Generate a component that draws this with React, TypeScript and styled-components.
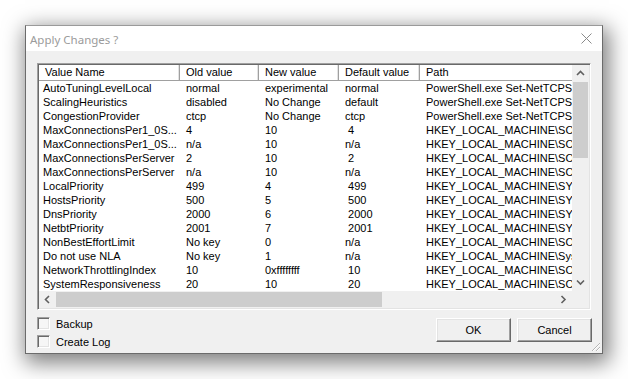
import styled, { createGlobalStyle } from "styled-components";

const GlobalStyle = createGlobalStyle`
  html, body {
    margin: 0;
    padding: 0;
    background: #ffffff;
  }
  body {
    font-family: "Liberation Sans", Arial, sans-serif;
    font-size: 11px;
    color: #000;
  }
`;

const Page = styled.div`
  width: 628px;
  height: 379px;
  padding: 25px 0 0 25px;
  box-sizing: border-box;
  overflow: hidden;
`;

const Window = styled.div`
  position: relative;
  width: 578px;
  height: 329px;
  box-sizing: border-box;
  border: 1px solid #6b6b6b;
  border-top-color: #9a9a9a;
  background: #f0f0f0;
  display: flex;
  flex-direction: column;
  box-shadow: 3px 6px 20px 3px rgba(0, 0, 0, 0.5);
`;

const TitleBar = styled.div`
  height: 25px;
  background: #ffffff;
  display: flex;
  align-items: center;
  justify-content: space-between;
  padding: 0 10px 0 4px;
  flex-shrink: 0;
`;

const Title = styled.span`
  font-family: "Noto Sans", "Open Sans", sans-serif;
  font-size: 11.5px;
  color: #9b9b9b;
  padding-top: 1px;
`;

const CloseButton = styled.div`
  width: 12px;
  height: 12px;
  display: flex;
  align-items: center;
  justify-content: center;
`;

const Body = styled.div`
  flex: 1;
  padding: 12px 10px 0 11px;
  display: flex;
  flex-direction: column;
`;

const ListView = styled.div`
  width: 554px;
  height: 247px;
  box-sizing: border-box;
  border: 1px solid;
  border-color: #a0a0a0 #ffffff #ffffff #a0a0a0;
  box-shadow: inset 1px 1px 0 #696969, inset -1px -1px 0 #e3e3e3;
  padding: 1px;
  background: #ffffff;
  display: grid;
  grid-template-columns: 533px 17px;
  grid-template-rows: 226px 17px;
`;

const Viewport = styled.div`
  overflow: hidden;
  background: #ffffff;
`;

const cols = "141px 79px 80px 81px 320px";

const HeaderRow = styled.div`
  display: grid;
  grid-template-columns: ${cols};
  height: 16px;
`;

const HeaderCell = styled.div`
  box-sizing: border-box;
  height: 16px;
  line-height: 15px;
  padding-left: 6px;
  background: #ffffff;
  border-right: 1px solid #a0a0a0;
  border-bottom: 1px solid #a0a0a0;
  box-shadow: inset 1px 0 0 #ffffff, inset -1px 0 0 #e3e3e3;
  white-space: nowrap;
  overflow: hidden;
`;

const Row = styled.div`
  display: grid;
  grid-template-columns: ${cols};
  height: 14px;
  line-height: 14px;
`;

const Cell = styled.div<{ $first?: boolean }>`
  padding-left: ${(p) => (p.$first ? "4px" : "6px")};
  white-space: pre;
  overflow: hidden;
`;

const VScroll = styled.div`
  background: #f0f0f0;
  display: flex;
  flex-direction: column;
`;

const HScroll = styled.div`
  background: #f0f0f0;
  display: flex;
  align-items: stretch;
`;

const ArrowBox = styled.div`
  width: 17px;
  height: 17px;
  flex-shrink: 0;
  display: flex;
  align-items: center;
  justify-content: center;
`;

const VThumb = styled.div`
  margin: 0 1px;
  height: 76px;
  background: #cdcdcd;
`;

const HThumb = styled.div`
  margin: 1px 0;
  width: 326px;
  background: #cdcdcd;
`;

const Spacer = styled.div`
  flex: 1;
`;

const Corner = styled.div`
  background: #f0f0f0;
`;

const Footer = styled.div`
  display: flex;
  justify-content: space-between;
  padding-top: 7px;
`;

const Checks = styled.div`
  display: flex;
  flex-direction: column;
  gap: 5px;
`;

const CheckRow = styled.label`
  display: flex;
  align-items: center;
  gap: 6px;
  height: 13px;
`;

const CheckBox = styled.span`
  width: 13px;
  height: 13px;
  box-sizing: border-box;
  border: 1px solid;
  border-color: #a0a0a0 #ffffff #ffffff #a0a0a0;
  box-shadow: inset 1px 1px 0 #696969, inset -1px -1px 0 #e3e3e3;
  background: #f6f6f6;
`;

const Buttons = styled.div`
  display: flex;
  gap: 6px;
  padding-top: 1px;
`;

const Button = styled.div`
  width: 75px;
  height: 24px;
  box-sizing: border-box;
  border: 1px solid;
  border-color: #ffffff #696969 #696969 #ffffff;
  box-shadow: inset -1px -1px 0 #a0a0a0, inset 1px 1px 0 #e3e3e3;
  background: #f0f0f0;
  display: flex;
  align-items: center;
  justify-content: center;
  padding-bottom: 1px;
`;

const Grip = styled.svg`
  position: absolute;
  right: 1px;
  bottom: 1px;
`;

const Chevron = ({ dir }: { dir: "up" | "down" | "left" | "right" }) => {
  const pts = {
    up: "1,5 4.5,1.5 8,5",
    down: "1,1.5 4.5,5 8,1.5",
    left: "5,1 1.5,4.5 5,8",
    right: "1.5,1 5,4.5 1.5,8",
  }[dir];
  const vertical = dir === "up" || dir === "down";
  return (
    <svg width={vertical ? 9 : 7} height={vertical ? 7 : 9}>
      <polyline points={pts} fill="none" stroke="#606060" strokeWidth="1.6" />
    </svg>
  );
};

const rows: string[][] = [
  ["AutoTuningLevelLocal", "normal", "experimental", "normal", "PowerShell.exe Set-NetTCPSetting -AutoTuningLevelLocal"],
  ["ScalingHeuristics", "disabled", "No Change", "default", "PowerShell.exe Set-NetTCPSetting -ScalingHeuristics"],
  ["CongestionProvider", "ctcp", "No Change", "ctcp", "PowerShell.exe Set-NetTCPSetting -CongestionProvider"],
  ["MaxConnectionsPer1_0S...", "4", "10", " 4", "HKEY_LOCAL_MACHINE\\SOFTWARE\\Microsoft"],
  ["MaxConnectionsPer1_0S...", "n/a", "10", "n/a", "HKEY_LOCAL_MACHINE\\SOFTWARE\\Microsoft"],
  ["MaxConnectionsPerServer", "2", "10", " 2", "HKEY_LOCAL_MACHINE\\SOFTWARE\\Microsoft"],
  ["MaxConnectionsPerServer", "n/a", "10", "n/a", "HKEY_LOCAL_MACHINE\\SOFTWARE\\Microsoft"],
  ["LocalPriority", "499", "4", " 499", "HKEY_LOCAL_MACHINE\\SYSTEM\\CurrentControlSet"],
  ["HostsPriority", "500", "5", " 500", "HKEY_LOCAL_MACHINE\\SYSTEM\\CurrentControlSet"],
  ["DnsPriority", "2000", "6", " 2000", "HKEY_LOCAL_MACHINE\\SYSTEM\\CurrentControlSet"],
  ["NetbtPriority", "2001", "7", " 2001", "HKEY_LOCAL_MACHINE\\SYSTEM\\CurrentControlSet"],
  ["NonBestEffortLimit", "No key", "0", "n/a", "HKEY_LOCAL_MACHINE\\SOFTWARE\\Policies"],
  ["Do not use NLA", "No key", "1", "n/a", "HKEY_LOCAL_MACHINE\\System\\CurrentControlSet"],
  ["NetworkThrottlingIndex", "10", "0xffffffff", " 10", "HKEY_LOCAL_MACHINE\\SOFTWARE\\Microsoft"],
  ["SystemResponsiveness", "20", "10", " 20", "HKEY_LOCAL_MACHINE\\SOFTWARE\\Microsoft"],
];

const headers = ["Value Name", "Old value", "New value", "Default value", "Path"];

export default function App() {
  return (
    <>
      <GlobalStyle />
      <Page>
        <Window>
          <TitleBar>
            <Title>Apply Changes ?</Title>
            <CloseButton>
              <svg width="11" height="11">
                <path d="M0.5 0.5 L10.5 10.5 M10.5 0.5 L0.5 10.5" stroke="#8a8a8a" strokeWidth="1" />
              </svg>
            </CloseButton>
          </TitleBar>
          <Body>
            <ListView>
              <Viewport>
                <HeaderRow>
                  {headers.map((h) => (
                    <HeaderCell key={h}>{h}</HeaderCell>
                  ))}
                </HeaderRow>
                {rows.map((r, ri) => (
                  <Row key={ri}>
                    {r.map((c, ci) => (
                      <Cell key={ci} $first={ci === 0}>
                        {c}
                      </Cell>
                    ))}
                  </Row>
                ))}
              </Viewport>
              <VScroll>
                <ArrowBox>
                  <Chevron dir="up" />
                </ArrowBox>
                <VThumb />
                <Spacer />
                <ArrowBox>
                  <Chevron dir="down" />
                </ArrowBox>
              </VScroll>
              <HScroll>
                <ArrowBox>
                  <Chevron dir="left" />
                </ArrowBox>
                <HThumb />
                <Spacer />
                <ArrowBox>
                  <Chevron dir="right" />
                </ArrowBox>
              </HScroll>
              <Corner />
            </ListView>
            <Footer>
              <Checks>
                <CheckRow>
                  <CheckBox />
                  Backup
                </CheckRow>
                <CheckRow>
                  <CheckBox />
                  Create Log
                </CheckRow>
              </Checks>
              <Buttons>
                <Button>OK</Button>
                <Button>Cancel</Button>
              </Buttons>
            </Footer>
          </Body>
          <Grip width="12" height="12">
            <path d="M11 3 L3 11 M11 7 L7 11" stroke="#b4b4b4" strokeWidth="1" />
            <path d="M11 4 L4 11 M11 8 L8 11" stroke="#ffffff" strokeWidth="1" />
          </Grip>
        </Window>
      </Page>
    </>
  );
}
